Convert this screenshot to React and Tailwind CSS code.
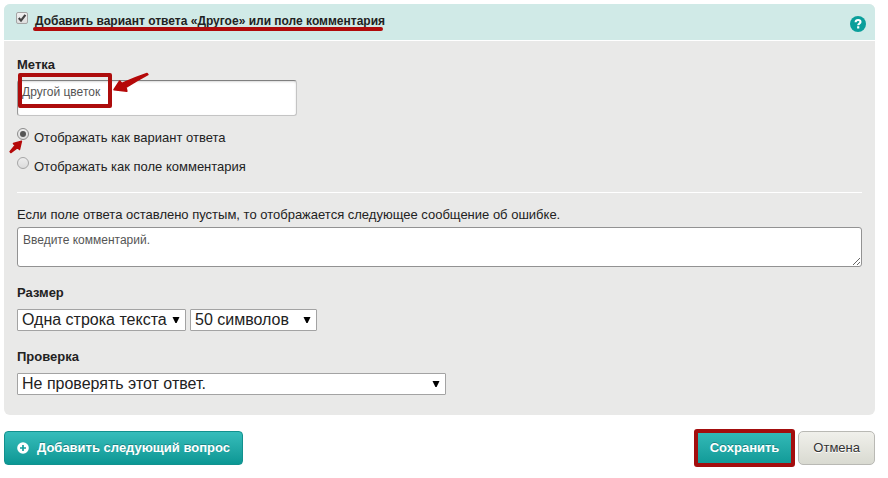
import { useState } from 'react';

const SIZES = ['50 символов', '100 символов'];
const FIELD_TYPES = ['Одна строка текста', 'Несколько строк'];
const CHECKS = ['Не проверять этот ответ.', 'Проверять адрес почты'];

function Select({ id, label, options, className }) {
  return (
    <div className={`relative ${className}`}>
      <select
        id={id}
        aria-label={label}
        className="block h-[22px] w-full appearance-none rounded-[1px] border border-[#a3a3a3] bg-white pl-1 pr-4 text-base leading-5 text-[#222]"
      >
        {options.map((option) => (
          <option key={option}>{option}</option>
        ))}
      </select>
      <svg className="pointer-events-none absolute right-1.5 top-2 h-1.5 w-2" viewBox="0 0 8 6" aria-hidden="true">
        <path d="M0.5 0h7L4.6 6H3.4z" fill="#000" />
      </svg>
    </div>
  );
}

function Radio({ id, label, checked, onChange, children }) {
  return (
    <div className="flex h-5 items-start">
      <span className="relative mr-[5px] h-3 w-3 shrink-0">
        <input
          id={id}
          type="radio"
          name="display"
          checked={checked}
          onChange={onChange}
          className="block h-3 w-3 appearance-none rounded-full border border-[#a5a5a5] bg-gradient-to-b from-[#ededed] to-[#dcdcdc] checked:border-[#8c8c8c]"
        />
        {checked && <span className="pointer-events-none absolute left-[3px] top-[3px] h-1.5 w-1.5 rounded-full bg-[#555]" />}
        {children}
      </span>
      <label htmlFor={id} className="leading-5">
        {label}
      </label>
    </div>
  );
}

export default function App() {
  const [display, setDisplay] = useState('answer');
  const [enabled, setEnabled] = useState(true);

  return (
    <main className="pb-3 pl-1 pr-[13px] pt-1 font-['Liberation_Sans',Arial,sans-serif] text-[13px] leading-5 text-[#222]">
      <section className="overflow-hidden rounded-md bg-[#e9e9e8]">
        <header className="flex h-[37px] items-start border-b border-white bg-[#d0eae7] pl-3 pr-[9px]">
          <span className="relative mt-2 h-3 w-3 shrink-0">
            <input
              id="other"
              type="checkbox"
              checked={enabled}
              onChange={(e) => setEnabled(e.target.checked)}
              className="block h-3 w-3 appearance-none rounded-[2px] border border-[#a5a5a5] bg-gradient-to-b from-[#f1f1f1] to-[#dedede]"
            />
            {enabled && (
              <svg className="pointer-events-none absolute inset-0" viewBox="0 0 12 12" fill="none" aria-hidden="true">
                <path d="M2.8 6 5 8.6 9.4 2.8" stroke="#444" strokeWidth="2.2" />
              </svg>
            )}
          </span>
          <label htmlFor="other" className="relative ml-[7px] mt-[7px] text-xs leading-5 font-bold">
            {'Добавить вариант ответа «Другое» или поле комментария'}
            <span className="absolute -left-0.5 right-0.5 top-4 h-1 rounded-full bg-[#b00b0b]" />
          </label>
          <button type="button" aria-label="Справка" className="ml-auto mt-3 h-4 w-4">
            <svg viewBox="0 0 16 16" fill="none" aria-hidden="true">
              <circle cx="8" cy="8" r="8" fill="#0a9f9b" />
              <path d="M5.6 6.3C5.7 4.7 6.7 4 8.1 4s2.4.8 2.4 2c0 1.6-2.3 1.6-2.3 3.2" stroke="#fff" strokeWidth="2.1" />
              <path d="M7.1 10.3h2.2v2.2H7.1z" fill="#fff" />
            </svg>
          </button>
        </header>

        <div className="px-[13px] pb-5 pt-[14px]">
          <label htmlFor="label" className="block font-bold">
            Метка
          </label>
          <div className="relative mt-[5px] w-[280px]">
            <input
              id="label"
              type="text"
              defaultValue="Другой цветок"
              className="block h-9 w-full rounded-[3px] border border-[#c4c4c4] border-t-[#808080] border-l-[#999] bg-white pb-3 pl-1 pr-1 text-xs text-[#555] shadow-[inset_0_1px_2px_rgba(0,0,0,0.15)]"
            />
            <span className="pointer-events-none absolute left-px -top-[7px] h-[35px] w-[94px] rounded-[2px] border-4 border-[#ad0c0c]" />
            <svg className="pointer-events-none absolute left-24 -top-2 h-5 w-9" viewBox="0 0 36 20" aria-hidden="true">
              <path
                d="M1 17.8 6.7 9l2 2.6Q21 6 34 1.6L34.8 2.6Q24 8.5 13 15.2l.8 4z"
                fill="#b50909"
                stroke="#b50909"
                strokeWidth="1.6"
                strokeLinejoin="round"
              />
            </svg>
          </div>

          <div className="mt-3 flex flex-col gap-[9px]">
            <Radio
              id="as-answer"
              label="Отображать как вариант ответа"
              checked={display === 'answer'}
              onChange={() => setDisplay('answer')}
            >
              <svg className="pointer-events-none absolute -left-2 top-3 h-3.5 w-3.5" viewBox="0 0 14 14" aria-hidden="true">
                <path
                  d="M12.5 1.2 10.5 9.5 8.5 7.8 1.8 12.6 1 11.6 6 5.5 4.4 3.5z"
                  fill="#b50909"
                  stroke="#b50909"
                  strokeWidth="1.4"
                  strokeLinejoin="round"
                />
              </svg>
            </Radio>
            <Radio
              id="as-comment"
              label="Отображать как поле комментария"
              checked={display === 'comment'}
              onChange={() => setDisplay('comment')}
            />
          </div>

          <hr className="mt-[15px] border-white" />

          <label htmlFor="error" className="mt-3 block">
            Если поле ответа оставлено пустым, то отображается следующее сообщение об ошибке.
          </label>
          <textarea
            id="error"
            defaultValue="Введите комментарий."
            className="mt-0.5 block h-10 w-full rounded-[3px] border border-[#929292] bg-white px-[5px] py-1 text-xs leading-4 text-[#555]"
          />

          <label htmlFor="type" className="mt-4 block font-bold">
            Размер
          </label>
          <div className="mt-1.5 flex gap-1">
            <Select id="type" options={FIELD_TYPES} className="w-[169px]" />
            <Select id="size" label="Число символов" options={SIZES} className="w-[127px]" />
          </div>

          <label htmlFor="check" className="mt-4 block font-bold">
            Проверка
          </label>
          <Select id="check" options={CHECKS} className="mt-1.5 w-[429px]" />
        </div>
      </section>

      <footer className="mt-3.5 flex items-center">
        <button
          type="button"
          className="flex h-[34px] items-center gap-2 rounded border border-[#12918e] bg-gradient-to-b from-[#35bdbb] to-[#0a9794] px-3 font-bold text-white [text-shadow:0_-1px_0_rgba(0,0,0,0.25)]"
        >
          <svg className="h-3 w-3" viewBox="0 0 12 12" aria-hidden="true">
            <circle cx="6" cy="6" r="5.8" fill="#fff" />
            <path d="M6 3v6M3 6h6" stroke="#16a09d" strokeWidth="1.7" />
          </svg>
          Добавить следующий вопрос
        </button>
        <button
          type="button"
          className="ml-auto h-[38px] rounded-[3px] border-4 border-[#a30e0e] bg-gradient-to-b from-[#35bdbb] to-[#0a9794] bg-origin-border px-3 font-bold text-white [text-shadow:0_-1px_0_rgba(0,0,0,0.25)]"
        >
          Сохранить
        </button>
        <button
          type="button"
          className="ml-[3px] h-[34px] rounded-[5px] border border-[#b9b9b4] bg-gradient-to-b from-[#f0f0eb] to-[#d9dad1] px-3.5 text-[#333] [text-shadow:0_1px_0_#fff]"
        >
          Отмена
        </button>
      </footer>
    </main>
  );
}
